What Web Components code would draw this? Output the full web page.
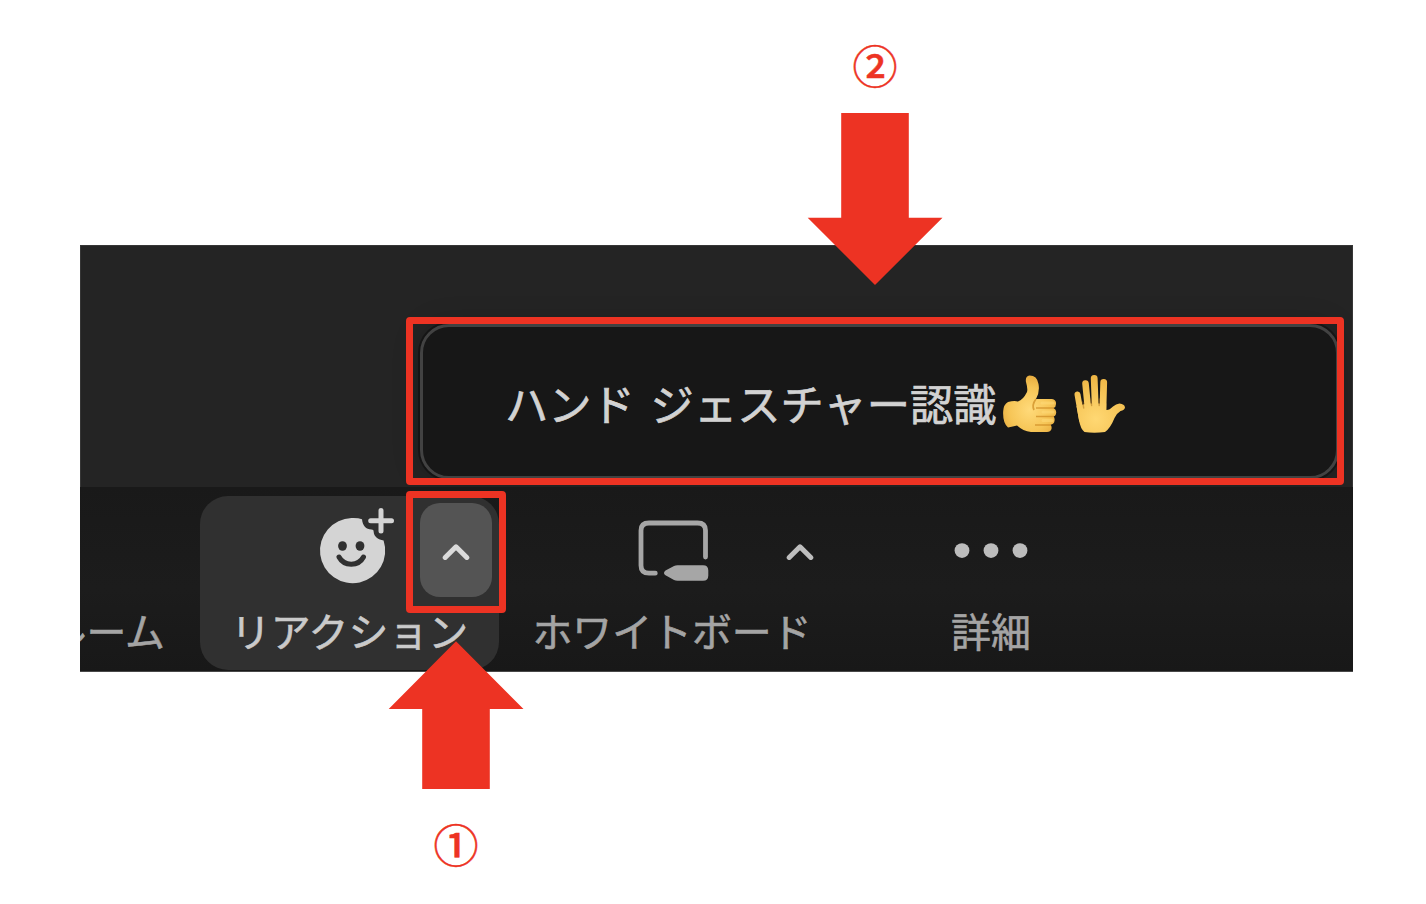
<!DOCTYPE html>
<html lang="ja">
<head>
<meta charset="utf-8">
<title>ハンド ジェスチャー認識</title>
<style>
html,body{margin:0;padding:0;background:#fff}
body{width:1426px;height:904px;overflow:hidden;font-family:"Noto Sans CJK JP","Noto Sans",sans-serif}
</style>
</head>
<body>
<guide-page></guide-page>
<script>
function define(name, html) {
  const t = document.createElement('template');
  t.innerHTML = html;
  customElements.define(name, class extends HTMLElement {
    constructor() {
      super();
      this.attachShadow({ mode: 'open' }).appendChild(t.content.cloneNode(true));
    }
  });
}

define('icon-reaction', `
<style>:host{display:block;width:80px;height:80px}svg{display:block;overflow:visible}</style>
<svg width="80" height="80" viewBox="316 510 80 80">
  <path fill="#d4d4d4" d="M362 519.2 C362.6 525.4 366 529.5 371.5 529.5 C373 529.5 373.7 530.2 373.7 532 C374 536.5 378.3 539.8 383.6 540.5 A32.6 32.6 0 1 1 351.5 518 Q358 517.7 362 519.2Z"/>
  <g fill="#303030"><ellipse cx="342.5" cy="546" rx="4.4" ry="4.8"/><ellipse cx="360" cy="546" rx="4.4" ry="4.8"/></g>
  <path d="M339 557 C344 566.5 358.500 566.5 363.500 557" fill="none" stroke="#303030" stroke-width="5" stroke-linecap="round"/>
  <path d="M381 510.500V531M370.700 520.800H391.500" stroke="#d4d4d4" stroke-width="5" stroke-linecap="round"/>
</svg>`);

define('icon-whiteboard', `
<style>:host{display:block;width:74px;height:64px}svg{display:block}</style>
<svg width="74" height="64" viewBox="636 518 74 64">
  <path d="M655.300 573.200H649Q641 573.200 641 565.500V530.500Q641 523 649 523H697.500Q705.500 523 705.500 530.500V557" fill="none" stroke="#a6a6a6" stroke-width="4.800" stroke-linecap="round"/>
  <path d="M665.500 570.500L674 566Q675.500 565.200 677.500 565.200H703Q708.300 565.200 708.300 570.500V575.500Q708.300 580.800 703 580.800H677.500Q675.500 580.800 674 580L665.500 575.300Q662.500 573 665.500 570.500Z" fill="#a6a6a6"/>
</svg>`);

define('icon-chevron', `
<style>:host{display:block;width:30px;height:20px}svg{display:block}</style>
<svg width="30" height="20" viewBox="0 0 30 20"><path d="M4.200 17.500L15 6.800L25.800 17.500" fill="none" stroke="currentColor" stroke-width="5" stroke-linecap="round" stroke-linejoin="round"/></svg>`);

define('icon-more', `
<style>:host{display:block;width:74px;height:16px}svg{display:block}</style>
<svg width="74" height="16" viewBox="0 0 74 16" fill="#bcbcbc"><circle cx="8" cy="8.600" r="7.400"/><circle cx="37" cy="8.600" r="7.400"/><circle cx="66" cy="8.600" r="7.400"/></svg>`);

define('emoji-hands', `
<style>:host{display:block;width:124px;height:62px}svg{display:block}</style>
<svg width="124" height="62" viewBox="1003 374 124 62" role="img" aria-label="👍🖐">
  <defs>
    <radialGradient id="p" cx=".5" cy=".6" r=".6"><stop offset="0" stop-color="#ffda7a"/><stop offset=".65" stop-color="#f6c556"/><stop offset="1" stop-color="#e8ad40"/></radialGradient>
    <radialGradient id="q" gradientUnits="userSpaceOnUse" cx="1096" cy="420" r="47"><stop offset="0" stop-color="#ffd873"/><stop offset=".5" stop-color="#f7c75a"/><stop offset="1" stop-color="#edb240"/></radialGradient>
  </defs>
  <path fill="url(#p)" d="M1008 403Q1014 401.500 1018 402.500Q1023 401 1027 393Q1028 390 1026 383Q1025 377.500 1029.500 376.600Q1037 376.500 1038.500 385Q1040 393 1036 400H1052Q1056.500 401 1056 405Q1056 408 1053.500 409Q1056.500 410.500 1056.200 413.500Q1056 417 1053.500 417.500Q1055 419 1054.500 422Q1054 425.300 1050.500 425.800Q1052 427 1051.500 430Q1050.500 433 1047 433H1031Q1023 432 1017 426.500Q1013 427.300 1008 428.500Q1002.500 424 1003.200 412Q1003.600 405.500 1008 403Z"/>
  <path d="M1036 400Q1031.500 406 1034 411M1036 409H1054M1036 417.500H1054M1035 426H1051" fill="none" stroke="#cf8d25" stroke-width="1.700" opacity=".75"/>
  <path d="M1042 404H1053M1043 413H1053M1043 421.500H1052" stroke="#ffdb79" stroke-width="3" stroke-linecap="round" opacity=".55"/>
  <g fill="none" stroke="url(#q)" stroke-linecap="round">
    <path d="M1077.500 395.500L1082 421" stroke-width="6"/>
    <path d="M1085.500 384.500L1088.500 415" stroke-width="6.600"/>
    <path d="M1094.200 379.300L1095.500 415" stroke-width="6.800"/>
    <path d="M1103.700 383.500L1102.800 415" stroke-width="6.800"/>
  </g>
  <path fill="url(#q)" d="M1076.500 407L1083 405.500L1088 404.500H1106.200V411Q1109 411.500 1113 407.500Q1116 405 1119.500 404.600Q1124.500 405 1125 408.500Q1124.500 411 1120.500 412Q1117 414 1114.500 419Q1110.500 429 1105 433Q1094 434.500 1084.500 433Q1080.500 430 1079 421Z"/>
  <path d="M1083.700 409L1082.800 403M1091.600 406.500L1091 400M1099.200 406.500L1099.300 400" stroke="#a86f1e" stroke-width="1.400" stroke-linecap="round" opacity=".5"/>
</svg>`);

define('gesture-menu', `
<style>
:host{display:flex;align-items:center;box-sizing:border-box;width:919px;height:155px;border:3px solid #424242;border-radius:29px;background:#171717;box-shadow:0 0 0 2px #151515,0 0 28px rgba(0,0,0,.22);padding-left:82px;color:#d2d2d2}
span{font-size:43.300px;line-height:60px;white-space:nowrap;word-spacing:6px;margin-right:6.500px;-webkit-text-stroke:.7px currentColor}
emoji-hands{margin-top:5px}
</style>
<span><slot></slot></span><emoji-hands></emoji-hands>`);

define('tool-item', `
<style>
:host{display:grid;grid-template-rows:108px 56px;justify-items:center;box-sizing:border-box;height:174px;flex:none;color:#a4a4a4}
:host([active]){background:#303030;border-radius:28px;color:#cacaca}
.top{display:flex;align-items:center;width:100%;height:108px}
.label{font-size:39.900px;line-height:52px;white-space:nowrap;-webkit-text-stroke:.6px currentColor}
</style>
<div class="top"><slot name="icon"></slot></div><div class="label"><slot></slot></div>`);

define('meeting-panel', `
<style>
:host{display:grid;grid-template-rows:242px 1fr;box-sizing:border-box;width:1273px;height:427px;background:#242424;overflow:hidden;box-shadow:inset 0 0 0 1px #363636}
.stage{display:flex;justify-content:flex-end;align-items:flex-end;padding:0 14px 8px 0}
.bar{display:flex;padding-top:9px;background:linear-gradient(#191919,#1c1c1c 55%,#181818);border-bottom:1px solid #484848}
.room{width:120px;grid-template-columns:120px;justify-items:end;overflow:hidden}
.room span{margin-right:35px}
.react{width:299px}
.react icon-reaction{margin-left:116px}
.btn{display:flex;align-items:center;justify-content:center;width:72px;height:94px;margin-left:24px;border-radius:20px;background:#545454;color:#dadada}
.board{width:346px}
.board icon-whiteboard{margin-left:137px}
.board icon-chevron{margin-left:75px;color:#bdbdbd}
.more{width:292px}
.more icon-more{margin:0 auto}
</style>
<div class="stage"><gesture-menu>ハンド ジェスチャー認識</gesture-menu></div>
<div class="bar">
  <tool-item class="room"><span>ルーム</span></tool-item>
  <tool-item class="react" active><icon-reaction slot="icon"></icon-reaction><div class="btn" slot="icon"><icon-chevron></icon-chevron></div>リアクション</tool-item>
  <tool-item class="board"><icon-whiteboard slot="icon"></icon-whiteboard><icon-chevron slot="icon"></icon-chevron>ホワイトボード</tool-item>
  <tool-item class="more"><icon-more slot="icon"></icon-more>詳細</tool-item>
</div>`);

define('callout-box', `
<style>:host{display:block;position:absolute;box-sizing:border-box;border:7.500px solid #ed3323;border-radius:4px}</style>`);

define('step-arrow', `
<style>
:host{display:flex;flex-direction:column;align-items:center;position:absolute;width:136px;color:#ed3323}
:host([up]){flex-direction:column-reverse}
span{font-size:45px;line-height:41px;height:44px;font-weight:500;-webkit-text-stroke:.5px currentColor}
</style>
<span><slot name="step"></slot></span><slot></slot>`);

define('guide-page', `
<style>
:host{display:block;position:relative;box-sizing:border-box;width:1426px;height:904px;padding:245px 0 0 80px;background:#fff}
svg{display:block}
b{font-weight:inherit}
.menu{left:406px;top:317px;width:938px;height:168px}
.caret{left:406px;top:491px;width:100px;height:122px}
.two{left:807px;top:44px;gap:25px}
.one{left:388px;top:641px;gap:34px}
</style>
<meeting-panel></meeting-panel>
<callout-box class="menu"></callout-box>
<callout-box class="caret"></callout-box>
<step-arrow class="two"><b slot="step">②</b><svg width="136" height="172" viewBox="0 0 136 172" fill="#ed3323"><path d="M34.200 0H101.800V104.700H135.500L68 172L.7 104.700H34.200Z"/></svg></step-arrow>
<step-arrow class="one" up><b slot="step">①</b><svg width="136" height="148" viewBox="0 0 136 148" fill="#ed3323"><path d="M68 0.300L135.500 68H101.800V148H34.200V68H.7Z"/></svg></step-arrow>`);
</script>
</body>
</html>
